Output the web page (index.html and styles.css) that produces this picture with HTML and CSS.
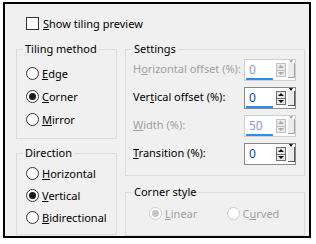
FILE: index.html
```html
<!DOCTYPE html>
<html>
<head>
    <title>Tiling</title>
    <link rel="stylesheet" href="styles.css">
</head>
<body>
    <div class="dialog">
        <label class="check-row">
            <span class="checkbox"></span>
            <span><u>S</u>how tiling preview</span>
        </label>

        <div class="columns">
            <div class="col-left">
                <fieldset class="group tiling">
                    <legend>Tiling method</legend>
                    <div class="radio-list">
                        <div class="radio-row"><span class="radio"></span><span><u>E</u>dge</span></div>
                        <div class="radio-row"><span class="radio on"></span><span><u>C</u>orner</span></div>
                        <div class="radio-row"><span class="radio"></span><span><u>M</u>irror</span></div>
                    </div>
                </fieldset>
                <fieldset class="group direction">
                    <legend>Direction</legend>
                    <div class="radio-list tight">
                        <div class="radio-row"><span class="radio"></span><span><u>H</u>orizontal</span></div>
                        <div class="radio-row"><span class="radio on"></span><span><u>V</u>ertical</span></div>
                        <div class="radio-row"><span class="radio"></span><span><u>B</u>idirectional</span></div>
                    </div>
                </fieldset>
            </div>

            <div class="col-right">
                <fieldset class="group settings">
                    <legend>Settings</legend>
                    <div class="setting disabled">
                        <span class="setting-label">H<u>o</u>rizontal offset (%):</span>
                        <div class="spinbox">
                            <div class="value">0<span class="bar"></span></div>
                            <div class="spin"><span class="up"></span><span class="down"></span></div>
                            <div class="drop"><span class="down"></span></div>
                        </div>
                    </div>
                    <div class="setting">
                        <span class="setting-label">Ver<u>t</u>ical offset (%):</span>
                        <div class="spinbox">
                            <div class="value">0<span class="bar"></span></div>
                            <div class="spin"><span class="up"></span><span class="down"></span></div>
                            <div class="drop"><span class="down"></span></div>
                        </div>
                    </div>
                    <div class="setting disabled">
                        <span class="setting-label"><u>W</u>idth (%):</span>
                        <div class="spinbox">
                            <div class="value">50<span class="bar"></span></div>
                            <div class="spin"><span class="up"></span><span class="down"></span></div>
                            <div class="drop"><span class="down"></span></div>
                        </div>
                    </div>
                    <div class="setting">
                        <span class="setting-label"><u>T</u>ransition (%):</span>
                        <div class="spinbox">
                            <div class="value">0</div>
                            <div class="spin"><span class="up"></span><span class="down"></span></div>
                            <div class="drop"><span class="down"></span></div>
                        </div>
                    </div>
                </fieldset>
                <fieldset class="group corner">
                    <legend>Corner style</legend>
                    <div class="corner-row">
                        <div class="radio-row disabled"><span class="radio on"></span><span><u>L</u>inear</span></div>
                        <div class="radio-row disabled"><span class="radio"></span><span>C<u>u</u>rved</span></div>
                    </div>
                </fieldset>
            </div>
        </div>
    </div>
</body>
</html>
```

FILE: styles.css
```css
body {
    margin: 0;
    background: #fff;
    font-family: "Noto Sans", Arial, sans-serif;
    font-size: 11px;
    color: #000;
}
u {
    text-decoration: underline;
    text-underline-offset: 1px;
}
.dialog {
    box-sizing: border-box;
    width: 308px;
    height: 236px;
    margin: 2px 0 0 3px;
    border: 2px solid #000;
    background: #f0f0f0;
}
.check-row {
    display: flex;
    align-items: center;
    gap: 4px;
    height: 13px;
    margin: 13px 0 0 21px;
    line-height: 13px;
}
.checkbox {
    box-sizing: border-box;
    width: 13px;
    height: 13px;
    border: 1px solid #333;
    background: #fff;
}
.columns {
    display: flex;
    gap: 8px;
    margin: 12px 0 0 11px;
}
.col-left {
    display: flex;
    flex-direction: column;
    gap: 7px;
    width: 101px;
}
.col-right {
    display: flex;
    flex-direction: column;
    gap: 9px;
    width: 180px;
}
.group {
    box-sizing: border-box;
    margin: 0;
    padding: 0;
    border: 1px solid #dcdcdc;
    min-width: 0;
}
.group legend {
    margin-left: 6px;
    padding: 0 2px;
    line-height: 14px;
}
.tiling { height: 97px; }
.direction { height: 89px; }
.settings { height: 134px; }
.corner { height: 51px; }

.radio-list {
    display: flex;
    flex-direction: column;
    padding: 6px 0 0 9px;
}
.radio-list.tight {
    padding-top: 2px;
}
.radio-row {
    display: flex;
    align-items: center;
    gap: 3px;
    height: 23px;
}
.tight .radio-row {
    height: 22px;
}
.radio {
    box-sizing: border-box;
    display: flex;
    align-items: center;
    justify-content: center;
    width: 13px;
    height: 13px;
    border: 1px solid #333;
    border-radius: 50%;
    background: #fff;
}
.radio.on::after {
    content: "";
    width: 7px;
    height: 7px;
    border-radius: 50%;
    background: #1a1a1a;
}
.radio-row.disabled {
    color: #a0a0a0;
}
.radio-row.disabled .radio {
    border-color: #cccccc;
}
.radio-row.disabled .radio.on::after {
    background: #c4c4c4;
}
.corner-row {
    display: flex;
    padding: 3px 0 0 23px;
}
.corner-row .radio-row {
    width: 80px;
    height: 22px;
}

.setting {
    display: flex;
    align-items: center;
    height: 28px;
    padding: 0 0 0 7px;
}
.setting-label {
    white-space: nowrap;
    padding-bottom: 3px;
}
.setting.disabled .setting-label {
    color: #a0a0a0;
}
.spinbox {
    box-sizing: border-box;
    display: flex;
    align-items: flex-start;
    width: 52px;
    height: 22px;
    margin-left: auto;
    margin-right: 8px;
    padding: 2px 0 0 1px;
    border: 1px solid #8a8a8a;
    background: #fff;
}
.setting.disabled .spinbox {
    border-color: #cfcfcf;
}
.value {
    position: relative;
    width: 26px;
    height: 18px;
    padding-left: 3px;
    line-height: 16px;
    font-size: 12px;
    color: #0a3fb0;
}
.setting.disabled .value {
    color: #8a9ccc;
}
.bar {
    position: absolute;
    left: 0;
    bottom: 0;
    width: 27px;
    height: 2px;
    background: #2f8ce8;
}
.spin {
    box-sizing: border-box;
    display: flex;
    flex-direction: column;
    width: 10px;
    height: 14px;
    margin: 1px 0 0 1px;
    border: 1px solid #6e6e6e;
    background: #e8e8e8;
}
.spin span {
    flex: 1;
    display: flex;
    align-items: center;
    justify-content: center;
}
.spin .up {
    border-bottom: 1px solid #6e6e6e;
}
.up::after {
    content: "";
    border-left: 3px solid transparent;
    border-right: 3px solid transparent;
    border-bottom: 3px solid #111;
}
.down::after {
    content: "";
    border-left: 3px solid transparent;
    border-right: 3px solid transparent;
    border-top: 3px solid #111;
}
.drop {
    box-sizing: border-box;
    display: flex;
    align-items: center;
    justify-content: center;
    width: 7px;
    height: 15px;
    margin: 1px 0 0 2px;
    border-right: 1px solid #555;
    border-bottom: 1px solid #555;
    background: #ececec;
}
.drop .down::after {
    border-left-width: 2px;
    border-right-width: 2px;
    border-top-width: 3px;
}
.setting.disabled .spin,
.setting.disabled .spin .up {
    border-color: #c2c2c2;
}
.setting.disabled .up::after {
    border-bottom-color: #a8a8a8;
}
.setting.disabled .down::after {
    border-top-color: #a8a8a8;
}
.setting.disabled .drop {
    border-color: #a0a0a0;
}
```
